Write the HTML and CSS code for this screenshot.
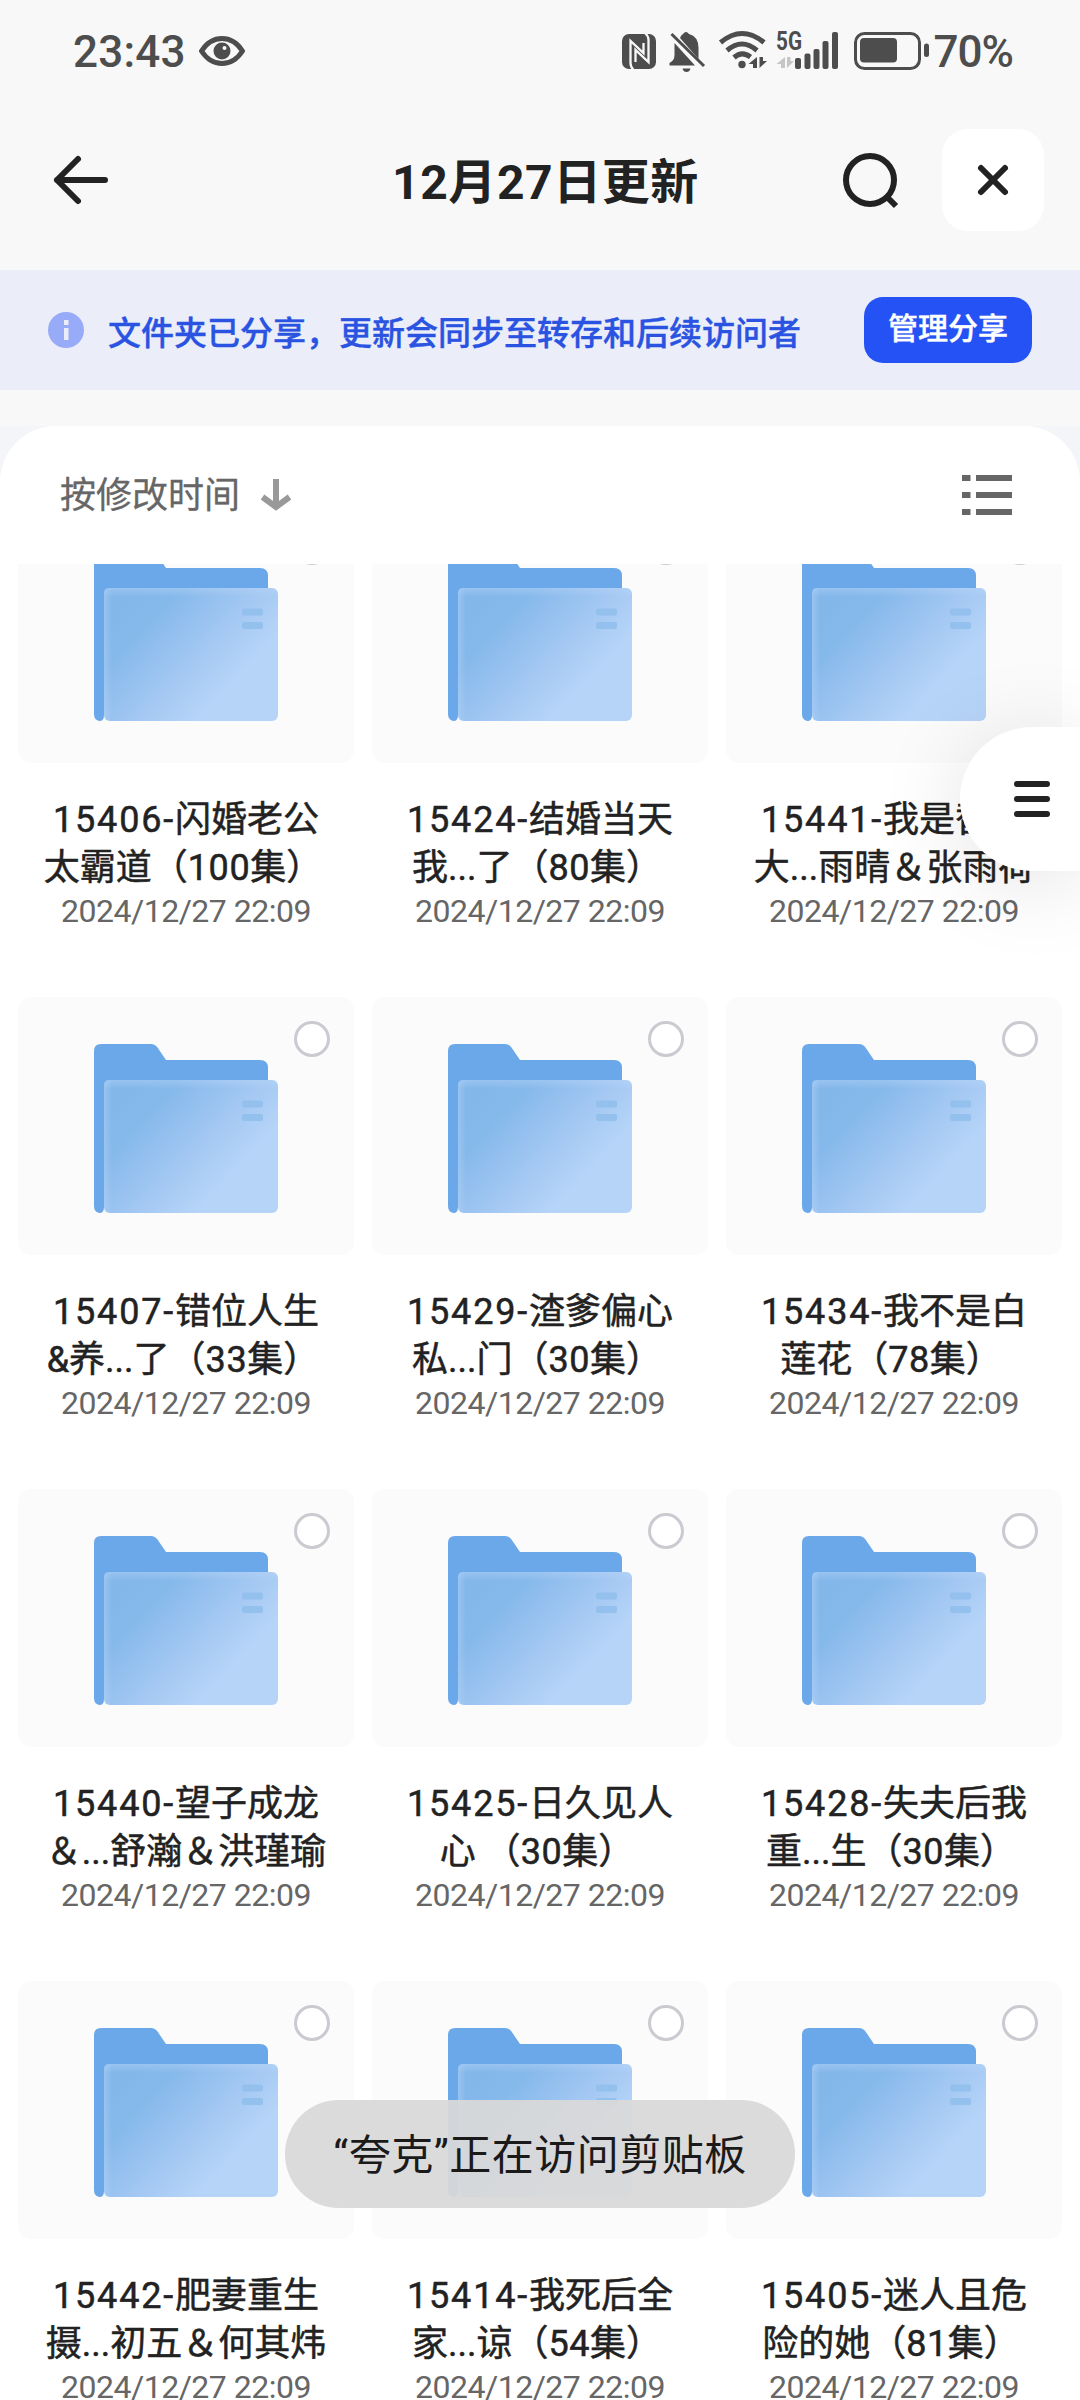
FILE: index.html
```html
<!DOCTYPE html>
<html lang="zh-CN">
  <head>
    <meta charset="UTF-8" />
    <meta name="viewport" content="width=device-width, initial-scale=1.0" />
    <title>12月27日更新</title>
    <link rel="stylesheet" href="styles.css">
  </head>
  <body>
    <div class="status-bar">
      <div class="status-left">
        <span class="clock">23:43</span>
        <svg class="eye" width="46" height="30" viewBox="0 0 46 30">
          <path d="M2.500 15C8 6.500 15 2.500 23 2.500S38 6.500 43.500 15C38 23.500 31 27.500 23 27.500S8 23.500 2.500 15Z" fill="none" stroke="#4d4d4d" stroke-width="5" stroke-linejoin="round" />
          <circle cx="23" cy="15" r="8.500" fill="#4d4d4d" />
          <circle cx="25.500" cy="12" r="2" fill="#f8f8f8" />
        </svg>
      </div>
      <div class="status-right">
        <svg width="310" height="50" viewBox="620 26 310 50" fill="#4d4d4d">
          <!-- nfc -->
          <rect x="622" y="34" width="34" height="35" rx="7" />
          <path d="M633.500 70Q630.500 67 630.500 63V41L643.500 53V43" fill="none" stroke="#f8f8f8" stroke-width="2.300" />
          <path d="M645 33Q648.500 36 648.500 40V62L635.500 50V62" fill="none" stroke="#f8f8f8" stroke-width="2.300" />
          <!-- muted bell -->
          <path d="M683 34q3-4 6 0q9.500 2.500 9.500 14v11L680 38q1-3 3-4z" />
          <path d="M674.500 43L695 65.500h-25.500v-2.500q5-2.500 5-8z" />
          <path d="M682.500 68.500h8q-1 3.500-4 3.500t-4-3.500z" />
          <path d="M671.500 34L704 66" stroke="#4d4d4d" stroke-width="3" />
          <!-- wifi -->
          <g fill="none" stroke="#4d4d4d" stroke-width="5">
            <path d="M720.500 42.500Q742 24.500 764 42.500" />
            <path d="M727 50.500Q742 37.500 757 50.500" />
            <path d="M734 57.500Q742 50.500 750.500 57" />
          </g>
          <circle cx="742" cy="64.500" r="3.700" />
          <path d="M757 57V68H753V64H748.500zM759.500 68V57H763V61H767z" />
          <!-- signal -->
          <path d="M785 57V68H781V64H776.500zM787 68V57H790.500V61H794z" fill="#c6c6c6" />
          <rect x="795" y="58" width="6" height="11" rx="2" />
          <rect x="804.500" y="53.500" width="6" height="15.500" rx="2" />
          <rect x="813.500" y="49" width="6" height="20" rx="2" />
          <rect x="822.500" y="41" width="6" height="28" rx="2" />
          <rect x="832" y="32" width="6" height="37" rx="2" />
          <text x="776" y="50" class="net" textLength="26" lengthAdjust="spacingAndGlyphs">5G</text>
          <!-- battery -->
          <rect x="855.500" y="33.500" width="64" height="35" rx="9" fill="none" stroke="#4d4d4d" stroke-width="3" />
          <rect x="860" y="38" width="37" height="24.500" rx="4" />
          <rect x="924" y="43.500" width="5" height="13.500" rx="2.500" />
        </svg>
        <span class="percent">70%</span>
      </div>
    </div>

    <header class="header">
      <svg class="back" width="60" height="60" viewBox="0 0 60 60">
        <path d="M27 9L6 30L27 51M6 30H54" />
      </svg>
      <h1>12月27日更新</h1>
      <div class="header-actions">
        <svg class="search" width="60" height="60" viewBox="0 0 60 60">
          <circle cx="30" cy="30" r="24" />
          <path d="M47 47L56 56" />
        </svg>
        <button class="close-btn">
          <svg width="36" height="36" viewBox="0 0 36 36">
            <path d="M6 6L30 30M30 6L6 30" />
          </svg>
        </button>
      </div>
    </header>

    <div class="notice">
      <svg width="36" height="36" viewBox="0 0 36 36">
        <circle cx="18" cy="18" r="18" fill="#98abf8" />
        <path d="M16 8h4.500v5H16zM16 16h4.500v12H16z" fill="#ebeef8" />
      </svg>
      <span class="notice-text">文件夹已分享，更新会同步至转存和后续访问者</span>
      <button class="share-btn">管理分享</button>
    </div>

    <div class="panel-back">
      <main class="panel">
        <div class="sort-bar">
          <span class="sort-label">按修改时间</span>
          <svg class="sort-arrow" width="32" height="32" viewBox="0 0 32 32">
            <path d="M16 0V27M2.500 18L16 28L29.500 18" />
          </svg>
          <svg class="list-icon" width="50" height="40" viewBox="0 0 50 40" fill="#666">
            <path d="M0 0h8.500v6H0zM14 0h36v6H14zM0 17h8.500v6H0zM14 17h36v6H14zM0 34h8.500v6H0zM14 34h36v6H14z" />
          </svg>
        </div>
        <div class="grid-wrap">
          <div class="grid" id="fileGrid"></div>
        </div>
      </main>
    </div>

    <button class="float-menu">
      <span></span>
      <span></span>
      <span></span>
    </button>

    <div class="toast">“夸克”正在访问剪贴板</div>

    <svg width="0" height="0" class="defs">
      <defs>
        <linearGradient id="front" gradientUnits="userSpaceOnUse" x1="35" y1="50" x2="140" y2="150">
          <stop offset="0" stop-color="#83b7ea" />
          <stop offset="0.200" stop-color="#86b9eb" />
          <stop offset="0.580" stop-color="#a2c7f2" />
          <stop offset="0.900" stop-color="#b6d4f8" />
          <stop offset="1" stop-color="#b6d4f8" />
        </linearGradient>
        <linearGradient id="edgeTop" x1="0" y1="0" x2="0" y2="1">
          <stop offset="0" stop-color="#c3dafa" stop-opacity="0.350" />
          <stop offset="1" stop-color="#c3dafa" stop-opacity="0" />
        </linearGradient>
        <linearGradient id="edgeLeft" x1="0" y1="0" x2="1" y2="0">
          <stop offset="0" stop-color="#c3dafa" stop-opacity="0.350" />
          <stop offset="1" stop-color="#c3dafa" stop-opacity="0" />
        </linearGradient>
        <symbol id="folder" viewBox="0 0 184 170">
          <path d="M0 7Q0 0 7 0H57Q61 0 63.500 3.500L72 16H166Q174 16 174 24V160H10V163Q10 169 5.500 169Q0 168 0 162Z" fill="#6aa8e9" />
          <rect x="10" y="36" width="174" height="133" rx="6" fill="url(#front)" />
          <rect x="10" y="36" width="174" height="9" rx="5" fill="url(#edgeTop)" />
          <rect x="10" y="36" width="8" height="133" rx="5" fill="url(#edgeLeft)" />
          <rect x="148" y="56.500" width="21" height="7" rx="2" fill="#94c0ee" />
          <rect x="148" y="70" width="21" height="7" rx="2" fill="#94c0ee" />
        </symbol>
      </defs>
    </svg>

    <script>
      const files = [
        ["15406-", "闪婚老公", "太霸道", "100"],
        ["15424-", "结婚当天", "我...了", "80"],
        ["15441-", "我是替嫁", "大...雨晴＆张雨荷"],
        ["15407-", "错位人生", "&养...了", "33"],
        ["15429-", "渣爹偏心", "私...门", "30"],
        ["15434-", "我不是白", "莲花", "78"],
        ["15440-", "望子成龙", "＆...舒瀚＆洪瑾瑜"],
        ["15425-", "日久见人", "心 ", "30"],
        ["15428-", "失夫后我", "重...生", "30"],
        ["15442-", "肥妻重生", "摄...初五＆何其炜"],
        ["15414-", "我死后全", "家...谅", "54"],
        ["15405-", "迷人且危", "险的她", "81"],
      ];

      const fileGrid = document.getElementById("fileGrid");

      files.forEach(([no, name, rest, count]) => {
        const episodes = count
          ? `（<span class="count">${count}</span>集）`
          : "";
        const item = document.createElement("div");
        item.className = "file";
        item.innerHTML = `
        <div class="thumb">
          <svg class="folder" width="184" height="170"><use href="#folder" /></svg>
          <i class="check"></i>
        </div>
        <div class="name">
          <div><span class="no">${no}</span>${name}</div>
          <div class="${count ? "episodes" : ""}">${rest}${episodes}</div>
        </div>
        <div class="date">2024/12/27 22:09</div>
      `;
        fileGrid.appendChild(item);
      });
    </script>
  </body>
</html>
```

FILE: styles.css
```css
* {
  box-sizing: border-box;
}
body {
  margin: 0;
  width: 1080px;
  height: 2400px;
  overflow: hidden;
  position: relative;
  display: flex;
  flex-direction: column;
  font-family: Roboto, "Noto Sans CJK SC", sans-serif;
  background: #f8f8f8;
  color: #222;
}
svg {
  display: block;
  flex: none;
}
button {
  border: none;
  padding: 0;
  font-family: inherit;
  cursor: pointer;
}
.defs {
  position: absolute;
}
.status-bar {
  height: 102px;
  flex: none;
  display: flex;
  justify-content: space-between;
  padding: 0 67px 0 73px;
  color: #4d4d4d;
  font-size: 44px;
  font-weight: 500;
}
.status-left,
.status-right {
  display: flex;
  align-items: center;
}
.clock {
  letter-spacing: 0.2px;
  padding-top: 1px;
}
.eye {
  margin-left: 13px;
}
.percent {
  margin-left: 4px;
  padding-top: 1px;
  letter-spacing: -1px;
}
.net {
  font-size: 25px;
  font-weight: 700;
}
.header {
  height: 168px;
  flex: none;
  display: flex;
  align-items: center;
  padding: 0 36px 12px 51px;
}
.header path,
.header circle {
  fill: none;
  stroke: #222;
  stroke-width: 6;
}
.back path,
.close-btn path {
  stroke-linecap: round;
  stroke-linejoin: round;
}
.header h1 {
  flex: 1;
  margin: 0 0 5px 281px;
  font-size: 48px;
  font-weight: 700;
  letter-spacing: 0.6px;
  white-space: nowrap;
}
.header-actions {
  display: flex;
  align-items: center;
  gap: 42px;
}
.close-btn {
  width: 102px;
  height: 102px;
  border-radius: 26px;
  background: #fff;
  display: flex;
  align-items: center;
  justify-content: center;
}
.notice {
  height: 120px;
  flex: none;
  display: flex;
  align-items: center;
  padding: 0 48px;
  background: #ebeef8;
}
.notice-text {
  flex: 1;
  margin: 2px 0 0 24px;
  font-size: 33px;
  font-weight: 500;
  color: #2a53e2;
  -webkit-text-stroke: 0.4px #2a53e2;
}
.share-btn {
  width: 168px;
  height: 66px;
  padding-bottom: 8px;
  border-radius: 19px;
  background: #2552f5;
  color: #fff;
  font-size: 30px;
  font-weight: 500;
  -webkit-text-stroke: 0.4px #fff;
}
.panel-back {
  flex: 1;
  min-height: 0;
  margin-top: 36px;
  display: flex;
  background: #f4f5f9;
}
.panel {
  flex: 1;
  display: flex;
  flex-direction: column;
  background: #fff;
  border-radius: 56px 56px 0 0;
}
.sort-bar {
  height: 138px;
  flex: none;
  display: flex;
  align-items: center;
  padding: 0 68px 0 60px;
}
.sort-label {
  margin-bottom: 7px;
  font-size: 36px;
  color: #666;
  -webkit-text-stroke: 0.3px #666;
}
.sort-arrow {
  margin-left: 20px;
}
.sort-arrow path {
  fill: none;
  stroke: #999;
  stroke-width: 6;
}
.list-icon {
  margin-left: auto;
}
.grid-wrap {
  flex: 1;
  min-height: 0;
  overflow: hidden;
}
.grid {
  display: grid;
  grid-template-columns: repeat(3, 336px);
  grid-auto-rows: 492px;
  column-gap: 18px;
  margin-top: -59px;
  padding: 0 18px;
}
.file {
  text-align: center;
}
.thumb {
  position: relative;
  height: 258px;
  padding: 47px 0 0 76px;
  border-radius: 13px;
  background: #fbfbfc;
}
.check {
  position: absolute;
  top: 24px;
  right: 24px;
  width: 36px;
  height: 36px;
  border: 3.5px solid #cacad0;
  border-radius: 50%;
  background: #fff;
}
.name {
  margin-top: 33px;
  font-size: 36px;
  line-height: 48px;
  white-space: nowrap;
  -webkit-text-stroke: 0.5px #222;
}
.no {
  letter-spacing: 1.8px;
}
.count {
  letter-spacing: 0.6px;
}
.episodes {
  padding-right: 6px;
}
.date {
  font-size: 32px;
  line-height: 38px;
  letter-spacing: -0.5px;
  color: #666;
}
.float-menu {
  position: absolute;
  top: 727px;
  right: 0;
  width: 120px;
  height: 144px;
  padding-left: 54px;
  border-radius: 72px 0 0 72px;
  background: #fff;
  box-shadow: 0 10px 90px rgba(0, 0, 0, 0.12);
  display: flex;
  flex-direction: column;
  justify-content: center;
  gap: 9px;
}
.float-menu span {
  width: 36px;
  height: 6px;
  border-radius: 3px;
  background: #222;
}
.toast {
  position: absolute;
  top: 2100px;
  left: 285px;
  width: 510px;
  height: 108px;
  border-radius: 54px;
  background: rgba(217, 217, 217, 0.94);
  color: #1a1a1a;
  font-size: 42px;
  letter-spacing: 0.5px;
  line-height: 111px;
  text-align: center;
  white-space: nowrap;
}
```
